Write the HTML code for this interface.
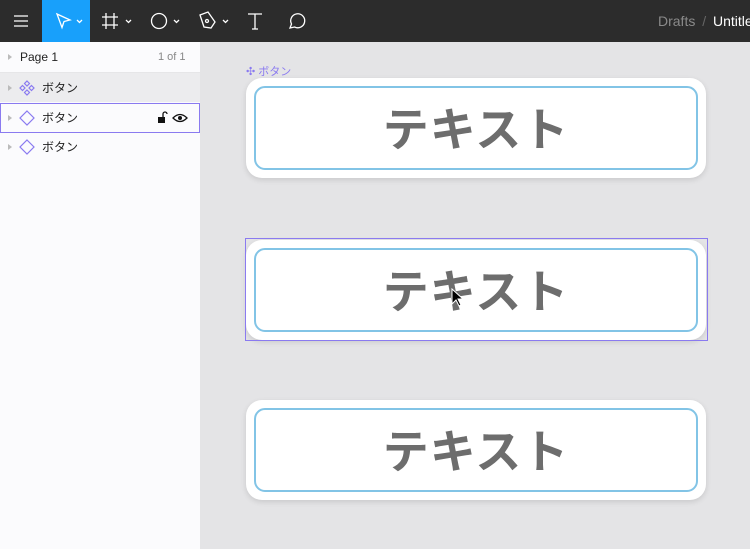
<!DOCTYPE html>
<html><head><meta charset="utf-8"><style>
*{margin:0;padding:0;box-sizing:border-box}
body{width:750px;height:549px;overflow:hidden;background:#e4e4e6;font-family:"Liberation Sans","Noto Sans CJK JP",sans-serif;position:relative}
.tb{position:absolute;left:0;top:0;width:750px;height:42px;background:#2c2c2c}
.sb{position:absolute;left:0;top:42px;width:200px;height:507px;background:#fbfbfd}
.row{position:absolute;left:0;width:200px;height:30px;font-size:12px;color:#222;line-height:30px}
.btn{position:absolute;left:246px;width:460px;height:100px;background:#fff;border-radius:16px;box-shadow:0 2px 6px rgba(0,0,0,.12)}
.in{position:absolute;left:8px;top:8px;right:8px;bottom:8px;border:2px solid #82c4e6;border-radius:11px;text-align:center;font-weight:bold;font-size:46px;color:#6d6d6d;line-height:84px;letter-spacing:1px}
.tri{position:absolute;left:8px;top:12px;width:0;height:0;border-left:4px solid #bbb;border-top:3px solid transparent;border-bottom:3px solid transparent}
</style></head><body>
<div class="tb">
 <div style="position:absolute;left:42px;top:0;width:48px;height:42px;background:#18a0fb"></div>
 <svg width="750" height="42" style="position:absolute;left:0;top:0" fill="none" stroke="#fff" stroke-width="1.3">
  <path d="M14 16h14M14 21h14M14 26h14"/>
  <path d="M57 14l13 6-6 1.5-2 6z"/><path d="M77 20l2.5 2.5 2.5-2.5"/>
  <path d="M106 13v16M114 13v16M102 17h16M102 25h16"/><path d="M126 20l2.5 2.5 2.5-2.5"/>
  <circle cx="159" cy="21" r="7.5"/><path d="M174 20l2.5 2.5 2.5-2.5"/>
  <path d="M200 15l8-3 7 10-4 6-7-1z"/><circle cx="207" cy="21" r="1.5"/><path d="M223 20l2.5 2.5 2.5-2.5"/>
  <path d="M248 14h14M255 14v15M252 29h6"/>
  <path d="M290 28l1.5-4a7 7 0 1 1 3 3z"/>
 </svg>
 <div style="position:absolute;left:658px;top:13px;font-size:14px;color:#8a8a8a;white-space:nowrap">Drafts <span style="color:#666;margin:0 3px">/</span> <span style="color:#fff">Untitled</span></div>
</div>
<div class="sb">
 <div class="row" style="top:0"><div class="tri"></div><span style="position:absolute;left:20px">Page 1</span><span style="position:absolute;left:158px;color:#888;font-size:11px">1 of 1</span></div>
 <div style="position:absolute;top:30px;left:0;width:200px;height:1px;background:#e6e6e8"></div>
 <div class="row" style="top:31px;background:#ececee;height:29px"><div class="tri"></div>
  <svg width="16" height="16" style="position:absolute;left:19px;top:7px" fill="none" stroke="#8a7af0" stroke-width="1.2"><path d="M8 1l2.5 2.5L8 6 5.5 3.5zM8 10l2.5 2.5L8 15l-2.5-2.5zM3.5 5.5L6 8l-2.5 2.5L1 8zM12.5 5.5L15 8l-2.5 2.5L10 8z"/></svg>
  <span style="position:absolute;left:42px">ボタン</span></div>
 <div class="row" style="top:61px;border:1px solid #8a7af0;line-height:28px"><div class="tri" style="left:7px;top:11px"></div>
  <svg width="16" height="16" style="position:absolute;left:18px;top:6px" fill="none" stroke="#8a7af0" stroke-width="1.2"><path d="M8 1l7 7-7 7-7-7z"/></svg>
  <span style="position:absolute;left:41px">ボタン</span>
  <svg width="40" height="16" style="position:absolute;left:154px;top:6px"><rect x="3" y="7" width="7" height="6" fill="#111"/><path d="M8 7V4a2 2 0 0 1 4 0" stroke="#111" stroke-width="1.3" fill="none"/><path d="M18 8q7-7 14 0q-7 7-14 0z" stroke="#111" stroke-width="1.3" fill="none"/><circle cx="25" cy="8" r="2" fill="#111"/></svg>
 </div>
 <div class="row" style="top:90px"><div class="tri"></div>
  <svg width="16" height="16" style="position:absolute;left:19px;top:7px" fill="none" stroke="#8a7af0" stroke-width="1.2"><path d="M8 1l7 7-7 7-7-7z"/></svg>
  <span style="position:absolute;left:42px">ボタン</span></div>
</div>
<div style="position:absolute;left:246px;top:63px;font-size:11px;color:#8a7af0">✣ ボタン</div>
<div class="btn" style="top:78px"><div class="in">テキスト</div></div>
<div class="btn" style="top:240px"><div class="in">テキスト</div></div>
<div style="position:absolute;left:245px;top:238px;width:463px;height:103px;border:1.5px solid #8a7af0"></div>
<svg width="16" height="22" style="position:absolute;left:451px;top:288px"><path d="M1 1v15l4-4 3 6 2-1-3-6h5z" fill="#000" stroke="#fff" stroke-width="1"/></svg>
<div class="btn" style="top:400px"><div class="in">テキスト</div></div>
</body></html>
